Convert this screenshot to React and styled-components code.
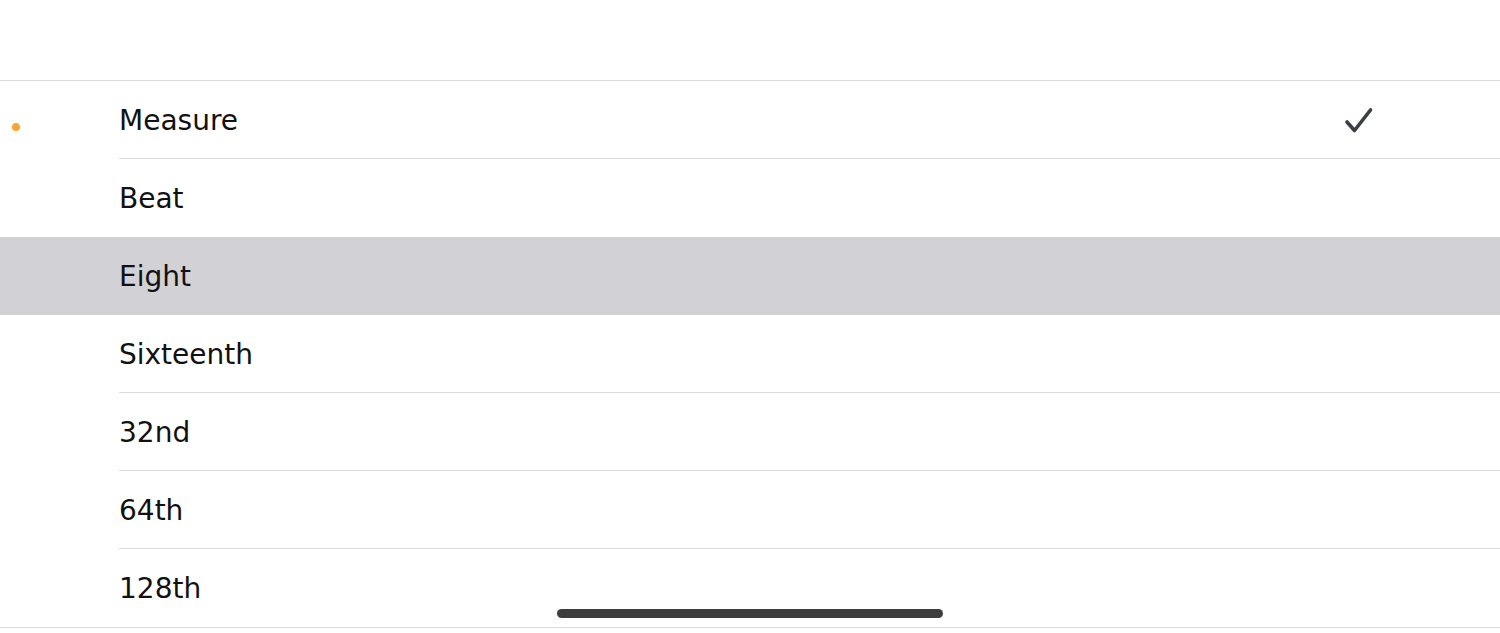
import React from "react";
import styled, { createGlobalStyle } from "styled-components";

const Global = createGlobalStyle`
  html, body { margin: 0; padding: 0; background: #ffffff; }
  body { font-family: "DejaVu Sans", "Open Sans", sans-serif; }
`;

const Screen = styled.div`
  position: relative;
  width: 1500px;
  height: 633px;
  overflow: hidden;
  background: #ffffff;
`;

const Header = styled.div`
  height: 80px;
  border-bottom: 1px solid #dcdcdf;
`;

const List = styled.ul`
  list-style: none;
  margin: 0;
  padding: 0;
  border-bottom: 1px solid #dcdcdf;
`;

const Row = styled.li`
  position: relative;
  display: flex;
  align-items: center;
  height: 78px;
  padding-left: 119px;
  padding-right: 126px;
  box-sizing: border-box;
  background: ${(p) => (p.$highlighted ? "#d1d1d6" : "transparent")};

  &::after {
    content: "";
    display: ${(p) => (p.$hideSep ? "none" : "block")};
    position: absolute;
    left: 119px;
    right: 0;
    bottom: 0;
    height: 1px;
    background: #dcdcdf;
  }
`;

const Dot = styled.span`
  position: absolute;
  left: 12px;
  top: 42px;
  width: 8px;
  height: 8px;
  border-radius: 50%;
  background: #f7a535;
`;

const Label = styled.span`
  flex: 1;
  font-size: 28px;
  color: #111111;
  letter-spacing: 0;
  margin-top: 1px;
`;

const Check = styled.svg`
  width: 30px;
  height: 30px;
  margin-top: 2px;
`;

const HomeIndicator = styled.div`
  position: absolute;
  left: 557px;
  top: 609px;
  width: 386px;
  height: 9px;
  border-radius: 5px;
  background: #3d3d3d;
`;

const items = ["Measure", "Beat", "Eight", "Sixteenth", "32nd", "64th", "128th"];
const selected = 0;
const highlighted = 2;

export default function App() {
  return (
    <>
      <Global />
      <Screen>
        <Header />
        <List>
          {items.map((label, i) => (
            <Row
              key={label}
              $highlighted={i === highlighted}
              $hideSep={i === highlighted || i === highlighted - 1 || i === items.length - 1}
            >
              {i === selected && <Dot />}
              <Label>{label}</Label>
              {i === selected && (
                <Check viewBox="0 0 30 30">
                  <path
                    d="M3 16 L10.5 24.5 L26.5 4"
                    fill="none"
                    stroke="#3b3e43"
                    strokeWidth="3.6"
                    strokeLinecap="round"
                    strokeLinejoin="round"
                  />
                </Check>
              )}
            </Row>
          ))}
        </List>
        <HomeIndicator />
      </Screen>
    </>
  );
}
